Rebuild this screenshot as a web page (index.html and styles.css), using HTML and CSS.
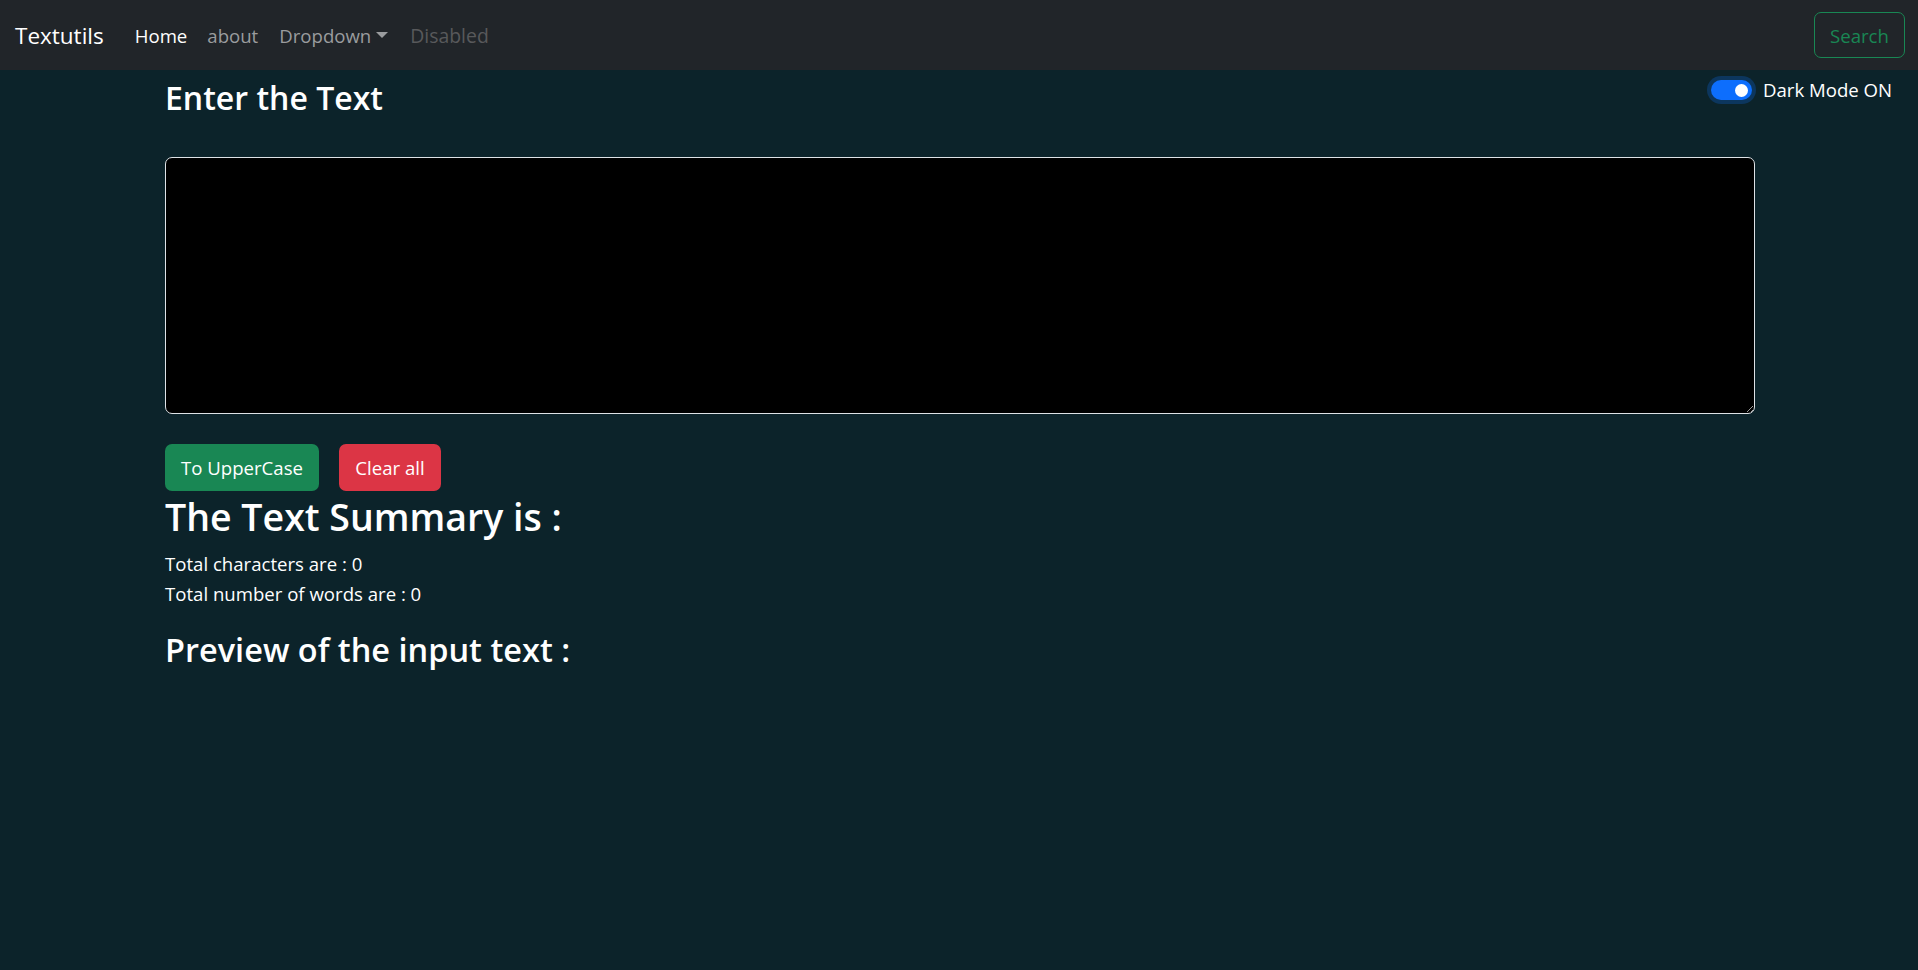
FILE: index.html
```html
<!DOCTYPE html>
<html lang="en">
<head>
<meta charset="utf-8">
<title>Textutils</title>
<link rel="stylesheet" href="styles.css">
</head>
<body>
<nav class="navbar">
  <div class="nav-left">
    <a class="brand" href="#">Textutils</a>
    <ul class="nav-links">
      <li><a class="nav-link active" href="#">Home</a></li>
      <li><a class="nav-link" href="#">about</a></li>
      <li><a class="nav-link dropdown" href="#">Dropdown</a></li>
      <li><a class="nav-link disabled" href="#">Disabled</a></li>
    </ul>
  </div>
  <form class="search-form">
    <button class="btn-search" type="button">Search</button>
  </form>
</nav>
<main class="page">
  <h3 class="title">Enter the Text</h3>
  <div class="switch-wrap">
    <span class="switch"><span class="knob"></span></span>
    <label class="switch-label">Dark Mode ON</label>
  </div>
  <div class="content">
    <textarea class="text-box" rows="8"></textarea>
    <div class="actions">
      <button class="btn btn-green" type="button">To UpperCase</button>
      <button class="btn btn-red" type="button">Clear all</button>
    </div>
    <h2 class="summary-title">The Text Summary is :</h2>
    <p class="summary">Total characters are : 0<br>Total number of words are : 0</p>
    <h3 class="preview-title">Preview of the input text :</h3>
  </div>
</main>
</body>
</html>
```
FILE: styles.css
```css
* { box-sizing: border-box; }
html, body { margin: 0; padding: 0; }
body {
  background: #0c232a;
  color: #fff;
  font-family: "Open Sans", "Noto Sans", sans-serif;
  font-size: 19px;
  line-height: 30px;
  min-height: 970px;
}
.navbar {
  height: 70px;
  background: #212529;
  display: flex;
  align-items: center;
  justify-content: space-between;
  padding: 0 13px 0 15px;
}
.nav-left { display: flex; align-items: center; padding-top: 2px; }
.brand {
  color: #fff;
  text-decoration: none;
  font-size: 22.5px;
  margin-right: 21px;
  line-height: 36px;
}
.nav-links {
  list-style: none;
  display: flex;
  margin: 0;
  padding: 0;
}
.nav-link {
  display: block;
  padding: 0 10px;
  color: #9a9c9e;
  text-decoration: none;
  font-size: 18.6px;
  line-height: 30px;
}
.nav-link.active { color: #fff; }
.nav-link.dropdown { padding-left: 11px; padding-right: 12px; }
.nav-link.disabled { color: #58595b; font-size: 19.4px; }
.nav-link.dropdown::after {
  content: "";
  display: inline-block;
  margin-left: 5px;
  vertical-align: 5px;
  border-top: 6px solid #9a9c9e;
  border-left: 6px solid transparent;
  border-right: 6px solid transparent;
}
.search-form { margin: 0; }
.btn-search {
  height: 46px;
  width: 91px;
  background: transparent;
  color: #198754;
  border: 1px solid #198754;
  border-radius: 7px;
  font-family: inherit;
  font-size: 18.6px;
  padding: 0;
}
.page {
  display: grid;
  grid-template-columns: minmax(0, 1fr) 1590px minmax(0, 1fr);
  padding: 7px 0 0 2px;
}
.title {
  grid-column: 2;
  grid-row: 1;
  margin: 0 0 38px;
  font-size: 32px;
  font-weight: 600;
  line-height: 42px;
}
.switch-wrap {
  grid-column: 2 / 4;
  grid-row: 1;
  justify-self: end;
  align-self: start;
  display: flex;
  align-items: center;
  gap: 11px;
  margin: -2px 26px 0 0;
  white-space: nowrap;
}
.switch {
  width: 41px;
  height: 20px;
  border-radius: 10px;
  background: #0d6efd;
  box-shadow: 0 0 0 4px rgba(13, 110, 253, 0.25);
  display: flex;
  align-items: center;
  justify-content: flex-end;
  padding-right: 4px;
}
.knob {
  width: 13px;
  height: 13px;
  border-radius: 50%;
  background: #fff;
}
.switch-label { font-size: 18.6px; }
.content {
  grid-column: 2;
  display: flex;
  flex-direction: column;
  align-items: flex-start;
}
.text-box {
  width: 100%;
  height: 257px;
  background: #000;
  color: #fff;
  border: 1px solid #dee2e6;
  border-radius: 7px;
  margin: 0 0 30px;
  font-family: inherit;
  font-size: 20px;
  padding: 7px 15px;
  display: block;
}
.actions { display: flex; gap: 20px; }
.btn {
  height: 47px;
  border: 0;
  border-radius: 7px;
  color: #fff;
  font-family: inherit;
  font-size: 18.6px;
  padding: 0 15px;
}
.btn-green { background: #198754; width: 154px; }
.btn-red { background: #dc3545; width: 102px; }
.summary-title {
  margin: 2px 0 8px;
  font-size: 37.5px;
  font-weight: 600;
  line-height: 48px;
}
.summary {
  margin: 0 0 20px;
  font-size: 18.6px;
  line-height: 30px;
}
.preview-title {
  margin: 0;
  font-size: 32.5px;
  font-weight: 600;
  line-height: 42px;
}
```
